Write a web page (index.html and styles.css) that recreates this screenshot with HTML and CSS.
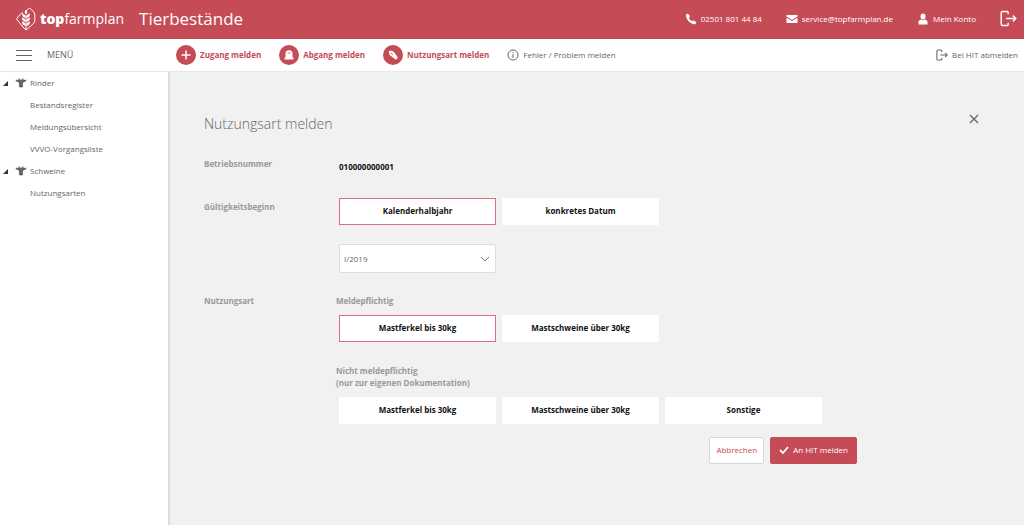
FILE: index.html
```html
<!DOCTYPE html>
<html lang="de">
<head>
<meta charset="utf-8">
<meta name="viewport" content="width=device-width, initial-scale=1">
<title>Tierbestände – topfarmplan</title>
<link rel="stylesheet" href="styles.css">
</head>
<body>
<svg class="sprite" aria-hidden="true">
  <symbol id="exit" viewBox="0 0 14 14"><path d="M6.500 1.200H2.200Q1 1.200 1 2.400v9.200q0 1.200 1.200 1.200H6.500M6.700 10.600v2.200M6.700 1.200v2.200M5 7h8M10.600 4.600 13 7l-2.400 2.400" fill="none" stroke="currentColor" stroke-width="1.200"/></symbol>
  <symbol id="cow" viewBox="0 0 12 10"><path d="M.8 1.6Q2 2.400 4 1.600h4q2 .8 3.200 0 .8 2-2.700 2.700L7.800 6l.4 2Q8 9.600 6 9.600T3.800 8l.4-2-.7-1.700Q0 3.600.8 1.600ZM3.500.4h1v1.200h-1ZM7.500.4h1v1.200h-1Z" fill="currentColor"/></symbol>
</svg>
<header class="topbar">
  <a class="brand" href="#">
    <svg class="brand-mark" viewBox="0 0 20 24" aria-hidden="true">
      <path d="M6.500 5 1 11Q.4 12 1 12.800L9 22.300Q10 23.300 11 22.400L18 16Q18.800 15.300 18.800 14V7Q18.800 6 18 5.200L14.500 1.800Q13.300.8 12.200 1.800L10.500 3.500" fill="none" stroke="currentColor"/>
      <path d="M10 22.500V8" stroke="currentColor"/>
      <path d="M10 2.500Q12.500 5 10 7.500 7.500 5 10 2.500ZM9.700 10.800Q6 10.500 6 6.500 9.700 7.200 9.700 10.800ZM10.300 10.800Q14 10.500 14 6.500 10.300 7.200 10.300 10.800ZM9.700 14.800Q6 14.500 6 10.500 9.700 11.200 9.700 14.800ZM10.300 14.800Q14 14.500 14 10.500 10.300 11.200 10.300 14.800ZM9.700 18.800Q6 18.500 6 14.500 9.700 15.200 9.700 18.800ZM10.300 18.800Q14 18.500 14 14.500 10.300 15.200 10.300 18.800Z" fill="currentColor"/>
    </svg>
    <span class="brand-name"><b>top</b>farmplan</span>
  </a>
  <h1 class="app-title">Tierbestände</h1>
  <nav class="contact" aria-label="Kontakt">
    <a class="contact-link" href="tel:025018014484"><svg class="icon-md" viewBox="0 0 12 12" aria-hidden="true"><path d="M1 1.500 3 .6 5 3.600 3.800 5Q5 7.200 7 8.300L8.400 7.200 11.400 9.200 10.400 11.200Q8 12 4.500 9T1 1.500Z" fill="currentColor"/></svg>02501 801 44 84</a>
    <a class="contact-link" href="mailto:service@topfarmplan.de"><svg class="icon-md" viewBox="0 0 12 12" aria-hidden="true"><path d="M.5 2h11v1.500L6 7 .5 3.500ZM.5 4.700 6 8.100l5.500-3.400V10H.5Z" fill="currentColor"/></svg>service@topfarmplan.de</a>
    <a class="contact-link" href="#"><svg class="icon-md" viewBox="0 0 12 12" aria-hidden="true"><ellipse cx="6" cy="3.500" rx="2.500" ry="3" fill="currentColor"/><path d="M1.500 11.500V8.500Q2 7 4 6.500 6 8 8 6.500q2 .5 2.500 2v3Z" fill="currentColor"/></svg>Mein Konto</a>
    <a class="logout" href="#" aria-label="Abmelden"><svg class="icon-lg" aria-hidden="true"><use href="#exit"/></svg></a>
  </nav>
</header>
<div class="toolbar">
  <button class="menu-button" type="button"><span class="burger"></span>MENÜ</button>
  <nav class="actions" aria-label="Meldungen">
    <a class="action" href="#"><span class="disc"><svg viewBox="0 0 20 20" aria-hidden="true"><path d="M10 5.500v9M5.500 10h9" stroke="currentColor" stroke-width="1.500"/></svg></span>Zugang melden</a>
    <a class="action" href="#"><span class="disc"><svg viewBox="0 0 20 20" aria-hidden="true"><path d="M6.500 12.500V8.500Q6.700 5.200 10 5.200t3.500 3.300v4ZM5.500 12.500h9V14.500h-9Z" fill="currentColor"/><path d="M8.500 8h3" stroke="#c54b56" stroke-width=".7"/></svg></span>Abgang melden</a>
    <a class="action" href="#"><span class="disc"><svg viewBox="0 0 20 20" aria-hidden="true"><path d="M5.800 7Q5.600 5.800 7 5.700 9.500 5.400 10.800 7L14.300 11.500Q15 13.500 13.500 14.300 12.500 14.700 11.500 13.800L7 10.200Q6 9 5.800 7Z" fill="currentColor"/><path d="m7.800 7.800 2 2" stroke="#c54b56" stroke-width=".9"/></svg></span>Nutzungsart melden</a>
    <a class="action action-plain" href="#"><svg class="icon-md" viewBox="0 0 12 12" aria-hidden="true"><circle cx="6" cy="6" r="5" fill="none" stroke="currentColor"/><path d="M6 5v4M6 3v1" stroke="currentColor"/></svg>Fehler / Problem melden</a>
  </nav>
  <a class="hit-logout" href="#"><svg class="icon-md" aria-hidden="true"><use href="#exit"/></svg>Bei HIT abmelden</a>
</div>
<div class="layout">
  <nav class="sidebar" aria-label="Hauptmenü">
    <ul class="tree">
      <li><a class="branch" href="#"><span class="caret"></span><svg class="icon-md" aria-hidden="true"><use href="#cow"/></svg>Rinder</a>
        <ul>
          <li><a class="leaf" href="#">Bestandsregister</a></li>
          <li><a class="leaf" href="#">Meldungsübersicht</a></li>
          <li><a class="leaf" href="#">VVVO-Vorgangsliste</a></li>
        </ul></li>
      <li><a class="branch" href="#"><span class="caret"></span><svg class="icon-md" aria-hidden="true"><use href="#cow"/></svg>Schweine</a>
        <ul><li><a class="leaf" href="#">Nutzungsarten</a></li></ul></li>
    </ul>
  </nav>
  <main class="content">
    <div class="heading-row">
      <h2 class="heading">Nutzungsart melden</h2>
      <button class="close" type="button" aria-label="Schließen"><svg viewBox="0 0 10 10" aria-hidden="true"><path d="m1 1 8 8M9 1 1 9" stroke="currentColor" stroke-width="1.300"/></svg></button>
    </div>
    <form class="form">
      <div class="row row-number">
        <span class="label">Betriebsnummer</span>
        <output class="number">010000000001</output>
      </div>
      <div class="row row-start">
        <label class="label" for="period">Gültigkeitsbeginn</label>
        <div class="fields">
          <div class="options">
            <button class="option selected" type="button" aria-pressed="true">Kalenderhalbjahr</button>
            <button class="option" type="button">konkretes Datum</button>
          </div>
          <select class="period" id="period"><option>I/2019</option><option>II/2019</option></select>
        </div>
      </div>
      <div class="row">
        <span class="label">Nutzungsart</span>
        <div class="groups">
          <section class="group">
            <h3 class="group-title">Meldepflichtig</h3>
            <div class="options">
              <button class="option selected" type="button" aria-pressed="true">Mastferkel bis 30kg</button>
              <button class="option" type="button">Mastschweine über 30kg</button>
            </div>
          </section>
          <section class="group">
            <h3 class="group-title">Nicht meldepflichtig<br>(nur zur eigenen Dokumentation)</h3>
            <div class="options">
              <button class="option" type="button">Mastferkel bis 30kg</button>
              <button class="option" type="button">Mastschweine über 30kg</button>
              <button class="option" type="button">Sonstige</button>
            </div>
          </section>
        </div>
      </div>
      <div class="buttons">
        <button class="btn" type="button">Abbrechen</button>
        <button class="btn btn-primary" type="submit"><svg class="check" viewBox="0 0 10 10" aria-hidden="true"><path d="m1 5 3 3 5-6" fill="none" stroke="currentColor" stroke-width="1.800"/></svg>An HIT melden</button>
      </div>
    </form>
  </main>
</div>
</body>
</html>
```
FILE: styles.css
```css
* { box-sizing: border-box; }
body {
  margin: 0;
  min-height: 100vh;
  display: flex;
  flex-direction: column;
  font: 8px/22px "Open Sans", sans-serif;
  color: #666;
  background: #f1f1f1;
}
a { color: inherit; text-decoration: none; }
button, select { font: inherit; color: inherit; cursor: pointer; }
ul { margin: 0; padding: 0; list-style: none; }
h1, h2, h3 { margin: 0; }
svg { display: block; }
.sprite { position: absolute; width: 0; height: 0; }
.icon-md { width: 12px; height: 12px; flex: none; }
.icon-lg { width: 17px; height: 17px; }

.topbar {
  display: flex;
  align-items: center;
  height: 39px;
  padding: 0 7px 2px 16px;
  color: #fff;
  background: #c54b56;
}
.brand { display: flex; align-items: center; gap: 4px; }
.brand-mark { width: 20px; height: 24px; }
.brand-name { font: 14px/20px "Open Sans", sans-serif; }
.brand-name b { font-weight: 800; }
.app-title { margin-left: 15px; font-size: 17px; font-weight: 400; }
.contact { display: flex; align-items: center; margin-left: auto; gap: 24px; }
.contact-link { display: flex; align-items: center; gap: 4px; }

.toolbar {
  display: flex;
  align-items: center;
  height: 33px;
  padding: 0 6px 0 16px;
  background: #fff;
  border-bottom: 1px solid #e8e8e8;
}
.menu-button {
  display: flex;
  align-items: center;
  gap: 15px;
  width: 160px;
  padding: 0;
  border: 0;
  font-size: 9px;
  background: none;
}
.burger { width: 16px; height: 11px; border: solid #666; border-width: 1px 0; background: linear-gradient(#666, #666) center / 100% 1px no-repeat; }
.actions { display: flex; align-items: center; gap: 18px; }
.action { display: flex; align-items: center; gap: 4px; font-weight: 700; color: #c54b56; }
.action-plain { font-weight: 400; color: #666; }
.disc { width: 20px; height: 20px; border-radius: 50%; color: #fff; background: #c54b56; }
.hit-logout { display: flex; align-items: center; gap: 4px; margin-left: auto; }

.layout { flex: 1; display: flex; }
.sidebar { width: 170px; background: #fff; border-right: 2px solid #dcdcdc; }
.branch { display: flex; align-items: center; gap: 3px; padding-left: 3px; }
.caret { width: 0; height: 0; margin-right: 4px; border-left: 5px solid transparent; border-bottom: 5px solid #333; }
.leaf { display: block; padding-left: 30px; }

.content { flex: 1; padding: 41px 44px 24px 34px; }
.heading-row { display: flex; justify-content: space-between; align-items: flex-start; }
.heading { font-size: 14px; font-weight: 300; }
.close { width: 12px; padding: 1px; border: 0; background: none; }
.form { max-width: 653px; padding-top: 20px; }
.row { display: grid; grid-template-columns: 132px 1fr; }
.row-number { height: 43px; }
.row-start { height: 94px; }
.label, .group-title { font-size: 8px; line-height: 12px; font-weight: 700; color: #999; }
.label { padding-top: 3px; }
.number { padding: 3px 0 0 3px; font-weight: 700; line-height: 18px; color: #111; }
.options { display: grid; grid-template-columns: repeat(3, 157px); gap: 6px; padding-left: 3px; }
.option { height: 27px; padding: 0 0 1px; border: 1px solid #fff; font-weight: 700; color: #111; background: #fff; }
.selected { border-color: #d9707c; }
.period {
  display: block;
  width: 157px;
  height: 29px;
  margin: 19px 0 0 3px;
  padding: 0 4px;
  appearance: none;
  border: 1px solid #ddd;
  border-radius: 2px;
  background: #fff url("data:image/svg+xml,%3Csvg xmlns='http://www.w3.org/2000/svg' viewBox='0 0 10 6'%3E%3Cpath d='m1 1 4 4 4-4' fill='none' stroke='%23777'/%3E%3C/svg%3E") right 5px center / 10px 6px no-repeat;
}
.groups { display: grid; gap: 23px; padding-top: 3px; }
.group-title { padding-bottom: 8px; }
.buttons { display: flex; justify-content: flex-end; gap: 6px; padding-top: 13px; }
.btn { display: flex; align-items: center; gap: 4px; height: 27px; padding: 0 6px 1px; border: 1px solid #d8d8d8; border-radius: 2px; color: #c54b56; background: #fff; }
.btn-primary { padding: 0 8px 1px; border-color: #c54b56; color: #fff; background: #c54b56; }
.check { width: 10px; height: 10px; }
```
